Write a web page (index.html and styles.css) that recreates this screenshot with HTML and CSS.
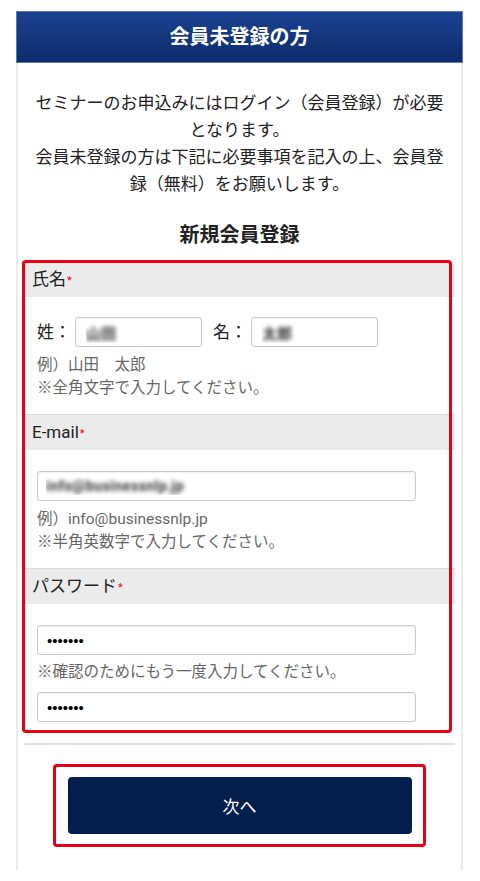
FILE: index.html
```html
<!DOCTYPE html>
<html lang="ja">
<head>
<meta charset="utf-8">
<title>会員未登録の方</title>
<link rel="stylesheet" href="styles.css">
</head>
<body>
<div class="card">
  <h1 class="card-title">会員未登録の方</h1>
  <div class="card-body">
    <p class="intro">セミナーのお申込みにはログイン（会員登録）が必要となります。<br>会員未登録の方は下記に必要事項を記入の上、会員登録（無料）をお願いします。</p>
    <h2 class="form-title">新規会員登録</h2>
    <div class="form">
      <section class="field">
        <div class="field-head">氏名<span class="req">*</span></div>
        <div class="field-body">
          <div class="name-row">
            <label class="name-label">姓：</label>
            <input class="input input-name masked" type="text" value="山田">
            <label class="name-label name-label-second">名：</label>
            <input class="input input-name masked" type="text" value="太郎">
          </div>
          <p class="hint">例）山田　太郎<br>※全角文字で入力してください。</p>
        </div>
      </section>
      <section class="field field-sep">
        <div class="field-head">E-mail<span class="req">*</span></div>
        <div class="field-body">
          <input class="input input-wide masked" type="text" value="info@businessnlp.jp">
          <p class="hint">例）info@businessnlp.jp<br>※半角英数字で入力してください。</p>
        </div>
      </section>
      <section class="field field-sep">
        <div class="field-head">パスワード<span class="req">*</span></div>
        <div class="field-body field-body-pw">
          <input class="input input-wide input-pw" type="password" value="1234567">
          <p class="hint hint-pw">※確認のためにもう一度入力してください。</p>
          <input class="input input-wide input-pw" type="password" value="1234567">
        </div>
      </section>
      <div class="highlight highlight-form"></div>
    </div>
    <div class="divider"></div>
    <div class="actions">
      <div class="btn-wrap">
        <button class="btn-next" type="button">次へ</button>
        <div class="highlight highlight-btn"></div>
      </div>
    </div>
  </div>
</div>
</body>
</html>
```

FILE: styles.css
```css
* {
  box-sizing: border-box;
}

html, body {
  margin: 0;
  padding: 0;
  background: #ffffff;
}

body {
  font-family: Roboto, "Noto Sans CJK JP", sans-serif;
  color: #222222;
  padding-top: 11px;
}

.card {
  width: 447px;
  margin-left: 16px;
}

.card-title {
  margin: 0;
  height: 52px;
  line-height: 50px;
  border: 1px solid #5c79ae;
  background: linear-gradient(#1a4190, #0e2c6c);
  color: #ffffff;
  font-size: 20px;
  font-weight: 700;
  text-align: center;
}

.card-body {
  border-left: 2px solid #ececec;
  border-right: 2px solid #ececec;
  padding: 27px 0 36px;
}

.intro {
  margin: 0;
  padding: 0 16px;
  font-size: 17px;
  line-height: 27px;
  text-align: center;
}

.form-title {
  margin: 22px 0 12px;
  font-size: 20px;
  line-height: 30px;
  font-weight: 700;
  text-align: center;
}

.form {
  position: relative;
  margin: 0 6px;
}

.field-sep {
  border-top: 1px solid #dcdcdc;
}

.field-head {
  height: 35px;
  line-height: 35px;
  background: #ebebeb;
  padding-left: 8px;
  font-size: 17px;
}

.req {
  color: #e60012;
  font-size: 11px;
  margin-left: 1px;
  position: relative;
  top: -1px;
}

.field-body {
  padding: 20px 13px 14px;
}

.field-sep .field-body {
  padding-top: 21px;
}

.field-sep .field-body-pw {
  padding-bottom: 8px;
}

.name-row {
  display: flex;
  align-items: center;
}

.name-label {
  font-size: 17px;
  line-height: 30px;
  margin-right: 4px;
}

.name-label-second {
  margin-left: 11px;
}

.input {
  display: block;
  height: 30px;
  border: 1px solid #c9c9c9;
  border-radius: 3px;
  background: #ffffff;
  box-shadow: inset 0 1px 2px rgba(0, 0, 0, 0.06);
  padding: 0 8px;
  font-family: Roboto, "Noto Sans CJK JP", sans-serif;
  font-size: 15px;
  color: #222222;
  outline: none;
}

.input-name {
  width: 127px;
  padding-left: 10px;
}

.input-wide {
  width: 379px;
}

.masked {
  color: transparent;
  font-weight: 700;
  text-shadow: 0 0 4px rgba(40, 40, 40, 0.9);
}

.input-pw {
  font-family: "Liberation Sans", Arial, sans-serif;
  font-size: 15px;
  color: #000000;
  padding-left: 9px;
}

.hint {
  margin: 7px 0 0;
  font-size: 15.5px;
  line-height: 23px;
  color: #666666;
}

.hint-pw {
  margin: 6px 0 8px;
}

.highlight {
  position: absolute;
  border: 3px solid #e60012;
  border-radius: 4px;
  pointer-events: none;
}

.highlight-form {
  left: -2px;
  right: 3px;
  top: -2px;
  bottom: -3px;
}

.divider {
  margin: 13px 6px 0;
  height: 2px;
  background: #e3e3e3;
}

.actions {
  display: flex;
  justify-content: center;
  padding-top: 32px;
}

.btn-wrap {
  position: relative;
}

.btn-next {
  display: block;
  width: 344px;
  height: 57px;
  border: none;
  border-radius: 4px;
  background: #041e4d;
  color: #ffffff;
  font-family: Roboto, "Noto Sans CJK JP", sans-serif;
  font-size: 17px;
}

.highlight-btn {
  left: -15px;
  right: -14px;
  top: -13px;
  bottom: -13px;
}
```
